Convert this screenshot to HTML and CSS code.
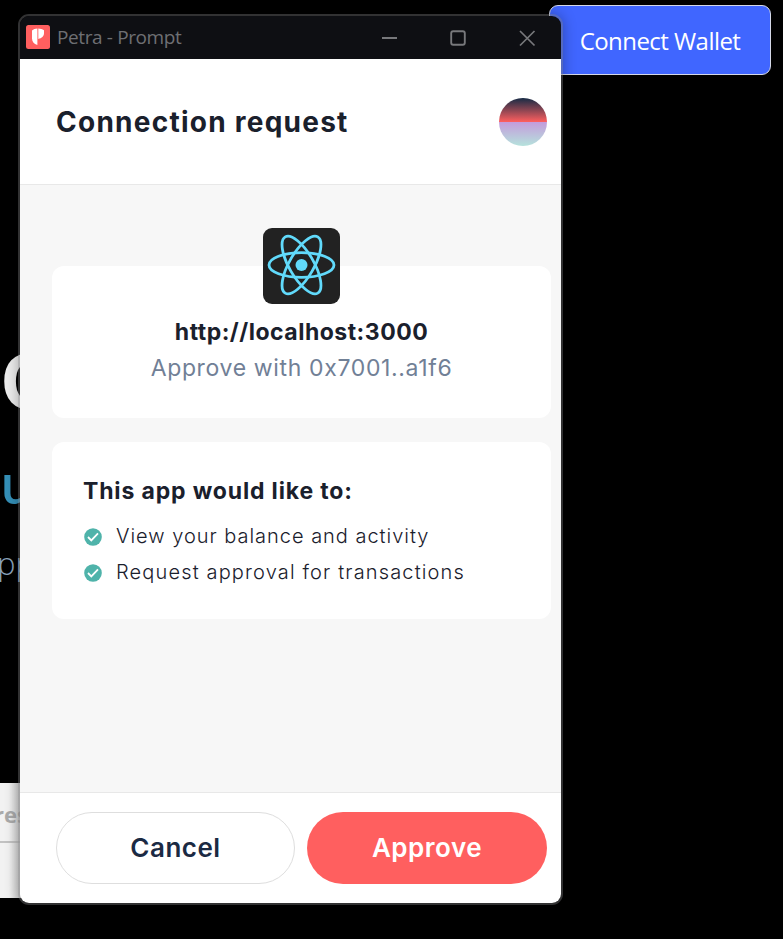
FILE: index.html
```html
<!DOCTYPE html>
<html lang="en">
<head>
<meta charset="utf-8">
<title>Petra - Prompt</title>
<link rel="stylesheet" href="styles.css">
</head>
<body>
<div class="page">
  <header class="topbar"><button class="connect">Connect Wallet</button></header>
  <main class="content">
    <h1 class="hero">C</h1>
    <h2 class="sub">u</h2>
    <p class="desc">pp</p>
    <div class="table"><div class="th">res</div><div class="td"></div></div>
  </main>
</div>
<section class="window">
  <div class="titlebar">
    <svg class="logo" viewBox="0 0 24 24"><rect width="24" height="24" rx="2.500" fill="#ff5f5f"/><path d="M11.400 3.500v16.500C7.700 18.700 6 16.500 6 13.200V5.500C7.400 4.300 9.200 3.600 11.400 3.500Z" fill="#fff"/><path d="M12.300 3.500c2.100.1 4 .7 5.700 1.800v2.700c0 3.200-2.200 5.300-5.700 5.900Z" fill="#fff"/></svg>
    <span class="wintitle">Petra - Prompt</span>
    <svg class="controls" viewBox="0 0 156 20" fill="none" stroke="#77787b"><path d="M0 10h15" stroke-width="2"/><rect x="69.200" y="3.200" width="13.600" height="13.600" rx="2" stroke-width="1.900"/><path d="M138 3l14.500 14.500M152.500 3L138 17.500" stroke-width="1.700"/></svg>
  </div>
  <div class="header"><h2>Connection request</h2><div class="avatar"></div></div>
  <div class="body">
    <div class="card site">
      <svg class="react" viewBox="0 0 77 76"><rect width="77" height="76" rx="9" fill="#222"/><g fill="none" stroke="#61dafb" stroke-width="2.800" transform="translate(38.500 37)"><ellipse rx="32.500" ry="12.300"/><ellipse rx="32.500" ry="12.300" transform="rotate(60)"/><ellipse rx="32.500" ry="12.300" transform="rotate(120)"/></g><circle cx="38.500" cy="37" r="6" fill="#61dafb"/></svg>
      <div class="url">http://localhost:3000</div>
      <div class="with">Approve with 0x7001..a1f6</div>
    </div>
    <div class="card perms">
      <h3>This app would like to:</h3>
      <div class="perm"><svg viewBox="0 0 18 18"><circle cx="9" cy="9" r="8.800" fill="#4fb3aa"/><path d="M4 9l3.300 3.400 6.700-7" fill="none" stroke="#fff" stroke-width="1.800"/></svg><span class="p1">View your balance and activity</span></div>
      <div class="perm"><svg viewBox="0 0 18 18"><circle cx="9" cy="9" r="8.800" fill="#4fb3aa"/><path d="M4 9l3.300 3.400 6.700-7" fill="none" stroke="#fff" stroke-width="1.800"/></svg><span class="p2">Request approval for transactions</span></div>
    </div>
  </div>
  <div class="footer"><button class="cancel">Cancel</button><button class="approve">Approve</button></div>
</section>
</body>
</html>
```

FILE: styles.css
```css
* { box-sizing: border-box; }
body { margin: 0; background: #000; font-family: Inter, sans-serif; }
h1, h2, h3, p { margin: 0; }
button { font-family: inherit; padding: 0; margin: 0; }
.page { height: 939px; overflow: hidden; }
.topbar { display: flex; justify-content: flex-end; padding: 5px 12px 0 0; height: 75px; }
.connect { width: 222px; height: 70px; border: 1px solid #d5d9e8; border-radius: 9px; background: #4066ff; color: #fff; font: 24px "Open Sans", sans-serif; letter-spacing: -.55px; }
.content { width: 30px; white-space: nowrap; }
.hero { height: 100px; margin-top: 257px; padding-left: 1px; font: bold 80px/100px "Liberation Sans", sans-serif; color: #eee; }
.sub { height: 60px; margin-top: 21px; padding-left: 1px; font: 600 56px/60px Lato, sans-serif; color: #3590b8; }
.desc { height: 40px; margin-top: 30px; margin-left: -3px; font: 300 31px/40px "Open Sans", sans-serif; color: #8ba3bd; }
.table { height: 115px; margin-top: 200px; background: linear-gradient(90deg, #f2f2f2 0 30%, #d0d0d0 20px); }
.th { height: 60px; border-bottom: 2px solid #c2c2c2; color: #aaa; font: bold 22px/62px "Open Sans", sans-serif; text-indent: -6px; }
.window { position: absolute; left: 18px; top: 14px; width: 545px; height: 891px; border: 2px solid rgba(110,111,114,.45); border-radius: 11px; overflow: hidden; display: flex; flex-direction: column; box-shadow: 0 0 14px rgba(0,0,0,.3); }
.titlebar { height: 43px; flex: none; background: #0e0f13; display: flex; align-items: center; padding-left: 6px; }
.logo { width: 24px; height: 24px; margin-top: -1px; }
.wintitle { margin: -2px 0 0 7px; font: 19px/24px "Open Sans", sans-serif; color: #6e6f73; letter-spacing: -.38px; width: 325px; }
.controls { width: 156px; height: 20px; margin-top: 1px; }
.header { height: 126px; flex: none; background: #fff; border-bottom: 1px solid #e8e8e8; display: flex; align-items: center; justify-content: space-between; padding: 0 14px 0 36px; }
.header h2 { font-size: 28px; line-height: 36px; font-weight: 700; color: #1a202c; letter-spacing: 1.25px; }
.avatar { width: 48px; height: 48px; border-radius: 50%; background: linear-gradient(#172b45, #ff5f5f 50%, #c49bdc 50%, #b5e2dc); }
.body { flex: 1; background: #f7f7f7; padding: 43px 10px 0 32px; }
.card { background: #fff; border-radius: 12px; }
.site { margin-top: 38px; height: 152px; display: flex; flex-direction: column; align-items: center; }
.react { width: 77px; height: 76px; margin-top: -38px; flex: none; }
.url { margin-top: 10px; font-size: 23px; line-height: 36px; font-weight: 700; color: #1a202c; letter-spacing: .5px; }
.with { font-size: 23px; line-height: 36px; color: #718096; letter-spacing: .65px; }
.perms { height: 177px; margin-top: 24px; padding: 31px 32px; color: #1a202c; }
.perms h3 { font-size: 23px; line-height: 36px; font-weight: 700; letter-spacing: .85px; margin-left: -1px; }
.perm { display: flex; align-items: center; height: 36px; font-size: 20px; font-weight: 300; margin-top: 9px; white-space: nowrap; }
.perm + .perm { margin-top: 0; }
.perm svg { width: 18px; height: 18px; margin: 2px 14px 0 0; }
.p1 { letter-spacing: .98px; }
.p2 { letter-spacing: 1.15px; }
.footer { height: 111px; flex: none; background: #fff; border-top: 1px solid #e8e8e8; display: flex; gap: 12px; padding: 19px 14px 19px 36px; }
.footer button { height: 72px; border-radius: 36px; font-size: 26px; font-weight: 600; letter-spacing: .5px; padding-bottom: 1px; }
.footer .cancel { width: 239px; border: 1px solid #dedede; background: #fff; color: #1b2a43; }
.footer .approve { width: 240px; border: 0; background: #ff5f5f; color: #fff; }
```
